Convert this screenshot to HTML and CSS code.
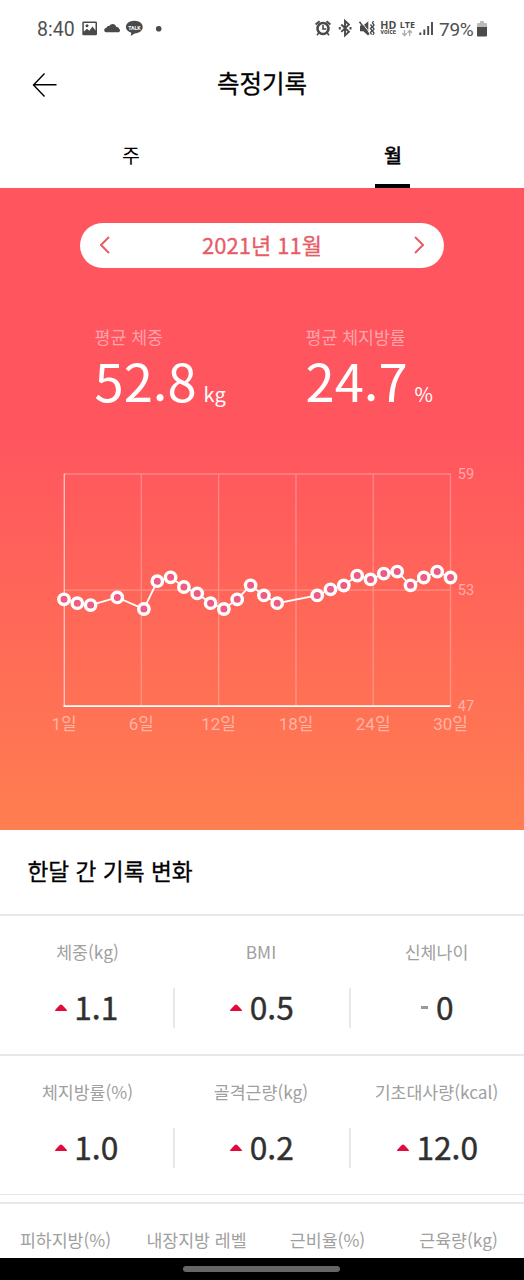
FILE: index.html
```html
<!DOCTYPE html>
<html lang="ko">
<head>
<meta charset="utf-8">
<meta name="viewport" content="width=device-width">
<title>측정기록</title>
<link rel="stylesheet" href="styles.css">
</head>
<body>
<div class="screen">
  <div class="status">
    <span class="clock">8:40</span>
    <svg class="status-left" width="84" height="20" viewBox="80 18 84 20" fill="#4a4a4a">
      <path fill-rule="evenodd" d="M83.5 21.5h12.300a1.200 1.200 0 0 1 1.200 1.200v11.300a1.200 1.200 0 0 1-1.200 1.200H83.500a1.200 1.200 0 0 1-1.200-1.200V22.700a1.200 1.200 0 0 1 1.200-1.200zM83.800 23v8.500l3.200-2.700 2.300 2 3.200-4.300 3 4V23z"/>
      <circle cx="87" cy="25.800" r="1.500"/>
      <path d="M106.800 32.300c-3.300 0-3.500-4.200-.3-4.600.4-1.400 1.500-2 2.800-1.700 1.500-3.200 6.300-2.700 7 1 1.700-.3 2.500.5 2.700 1.800 1.700.8 1.300 3.500-.8 3.500z"/>
      <path d="M134.300 20.800c5 0 8.400 2.800 8.400 6.300s-3.400 6.200-8 6.300l-4 2.600.6-3.200c-3.200-1-5.400-3-5.400-5.700 0-3.500 3.600-6.300 8.400-6.300z"/>
      <text class="talk" x="134.400" y="29.500" text-anchor="middle" textLength="12.500" lengthAdjust="spacingAndGlyphs">TALK</text>
      <circle cx="158.700" cy="28.800" r="2.800"/>
    </svg>
    <svg class="status-right" width="120" height="24" viewBox="314 17 120 24" fill="none" stroke="#4a4a4a">
      <circle cx="323" cy="28.500" r="5.500" stroke-width="2.600"/>
      <path d="M323 25v4h3.300M318.700 33l-1.700 2.200M327.300 33l1.700 2.200" stroke-width="1.600"/>
      <path d="M315.600 24.500l4-3.300M330.400 24.500l-4-3.300" stroke-width="2"/>
      <path d="M341.300 24.500l7.600 7.200-3.900 3.700V21l3.900 3.600-7.600 7.300" stroke-width="1.900"/>
      <path d="M338.800 28.300h2M349.500 28.300h2" stroke-width="2.400"/>
      <path d="M360 25.500h3.300l5-4.300v14.500l-5-4.500H360z" fill="#4a4a4a" stroke="none"/>
      <path d="M360.500 20.700l9.500 12.500" stroke="#fff" stroke-width="1"/>
      <path d="M359.500 21.700l9.500 12.800" stroke-width="1.500"/>
      <path d="M370.500 24.500l1.500 2-1.500 2 1.500 2-1.500 2 1 2M373.500 21l-1 2 1.500 2-1.500 2 1.500 2-1.500 2 1.500 2-1.200 2" stroke-width="1.300"/>
      <text class="hd" x="380.300" y="29" textLength="16" lengthAdjust="spacingAndGlyphs">HD</text>
      <text class="voice" x="380.500" y="34.400" textLength="15.500" lengthAdjust="spacingAndGlyphs">voice</text>
      <text class="lte" x="399.800" y="28" textLength="15.200" lengthAdjust="spacingAndGlyphs">LTE</text>
      <path d="M404.500 30v5.500M402.300 33.300l2.200 2.200 2.200-2.200M409.700 36v-5.500M407.500 32.700l2.200-2.200 2.200 2.200" stroke="#aaa" stroke-width="1.300"/>
      <path d="M420.300 32.500V35M424.300 29.500V35M428.200 26V35M432 22V35" stroke-width="1.900"/>
    </svg>
    <span class="percent">79%</span>
    <svg class="battery" width="10" height="16" viewBox="0 0 10 16"><path fill="#bbb" d="M3 0h4v2h2q1 0 1 1v4H0V3q0-1 1-1h2z"/><path fill="#4a4a4a" d="M0 6h10v8.500q0 1-1 1H1q-1 0-1-1z"/></svg>
  </div>

  <header class="header">
    <svg class="back" width="26" height="26" viewBox="0 0 26 26" fill="none" stroke="#000" stroke-width="1.400"><path d="M12.500 1.500L1.500 13l11 11.500M1.500 12.700h23"/></svg>
    <h1 class="title">측정기록</h1>
  </header>

  <nav class="tabs">
    <div class="tab">주</div>
    <div class="tab active">월</div>
  </nav>

  <section class="hero">
    <div class="month">
      <svg width="10" height="18" viewBox="0 0 10 18"><path d="M9 1L1 9l8 8"/></svg>
      <span>2021년 11월</span>
      <svg width="10" height="18" viewBox="0 0 10 18"><path d="M1 1l8 8-8 8"/></svg>
    </div>
    <div class="stats">
      <div><div class="stat-label">평균 체중</div><div class="stat-value">52.8<span class="unit">kg</span></div></div>
      <div><div class="stat-label">평균 체지방률</div><div class="stat-value">24.7<span class="unit">%</span></div></div>
    </div>
    <svg class="chart" width="524" height="290" viewBox="0 460 524 290">
      <path class="grid" d="M64 474H450.500V706M64 590.200H450.500M141.300 474V706M218.600 474V706M296 474V706M373.200 474V706"/>
      <path class="axis-y" d="M64.300 473.500V706"/>
      <path class="axis-x" d="M63.500 706.200H450.500"/>
      <polyline class="line" points="64,599.300 77.300,603.200 90.600,605.100 117.300,597.400 143.900,609 157.300,581.200 170.600,577.300 183.900,587 197.200,593.400 210.600,603.200 223.900,609 237.200,599.300 250.600,585.300 263.900,595.400 277.200,603.200 317.200,595.400 330.500,589.300 343.800,585.500 357.200,575.600 370.500,579.400 383.800,573.600 397.200,571.600 410.500,585.300 423.800,577.500 437.200,571.600 450.500,577.500"/>
      <g class="dots">
        <circle cx="64" cy="599.300" r="5.200"/><circle cx="77.300" cy="603.200" r="5.200"/><circle cx="90.600" cy="605.100" r="5.200"/><circle cx="117.300" cy="597.400" r="5.200"/><circle cx="143.900" cy="609" r="5.200"/><circle cx="157.300" cy="581.200" r="5.200"/><circle cx="170.600" cy="577.300" r="5.200"/><circle cx="183.900" cy="587" r="5.200"/><circle cx="197.200" cy="593.400" r="5.200"/><circle cx="210.600" cy="603.200" r="5.200"/><circle cx="223.900" cy="609" r="5.200"/><circle cx="237.200" cy="599.300" r="5.200"/><circle cx="250.600" cy="585.300" r="5.200"/><circle cx="263.900" cy="595.400" r="5.200"/><circle cx="277.200" cy="603.200" r="5.200"/><circle cx="317.200" cy="595.400" r="5.200"/><circle cx="330.500" cy="589.300" r="5.200"/><circle cx="343.800" cy="585.500" r="5.200"/><circle cx="357.200" cy="575.600" r="5.200"/><circle cx="370.500" cy="579.400" r="5.200"/><circle cx="383.800" cy="573.600" r="5.200"/><circle cx="397.200" cy="571.600" r="5.200"/><circle cx="410.500" cy="585.300" r="5.200"/><circle cx="423.800" cy="577.500" r="5.200"/><circle cx="437.200" cy="571.600" r="5.200"/><circle cx="450.500" cy="577.500" r="5.200"/>
      </g>
      <g class="y-labels"><text x="457.800" y="478.700">59</text><text x="457.800" y="595">53</text><text x="457.800" y="711">47</text></g>
      <g class="x-labels"><text x="64" y="729.500">1일</text><text x="141.300" y="729.500">6일</text><text x="218.600" y="729.500">12일</text><text x="296" y="729.500">18일</text><text x="373.200" y="729.500">24일</text><text x="450.500" y="729.500">30일</text></g>
    </svg>
  </section>

  <h2 class="section-title">한달 간 기록 변화</h2>

  <div class="row">
    <div class="cell"><div class="label">체중(kg)</div><div class="value"><svg class="up" width="12" height="7" viewBox="0 0 12 7"><path d="M0 7Q0 6 1 5L4.800 1Q6 0 7.200 1L11 5Q12 6 12 7z"/></svg><span>1.1</span></div></div>
    <div class="cell"><div class="label">BMI</div><div class="value"><svg class="up" width="12" height="7" viewBox="0 0 12 7"><path d="M0 7Q0 6 1 5L4.800 1Q6 0 7.200 1L11 5Q12 6 12 7z"/></svg><span>0.5</span></div></div>
    <div class="cell"><div class="label">신체나이</div><div class="value"><i class="dash"></i><span>0</span></div></div>
  </div>
  <div class="row last">
    <div class="cell"><div class="label">체지방률(%)</div><div class="value"><svg class="up" width="12" height="7" viewBox="0 0 12 7"><path d="M0 7Q0 6 1 5L4.800 1Q6 0 7.200 1L11 5Q12 6 12 7z"/></svg><span>1.0</span></div></div>
    <div class="cell"><div class="label">골격근량(kg)</div><div class="value"><svg class="up" width="12" height="7" viewBox="0 0 12 7"><path d="M0 7Q0 6 1 5L4.800 1Q6 0 7.200 1L11 5Q12 6 12 7z"/></svg><span>0.2</span></div></div>
    <div class="cell"><div class="label">기초대사량(kcal)</div><div class="value"><svg class="up" width="12" height="7" viewBox="0 0 12 7"><path d="M0 7Q0 6 1 5L4.800 1Q6 0 7.200 1L11 5Q12 6 12 7z"/></svg><span>12.0</span></div></div>
  </div>
  <div class="row four">
    <div class="label">피하지방(%)</div><div class="label">내장지방 레벨</div><div class="label">근비율(%)</div><div class="label">근육량(kg)</div>
  </div>
  <div class="navbar"><div class="handle"></div></div>
</div>
</body>
</html>
```
FILE: styles.css
```css
* { box-sizing: border-box; }
body { margin: 0; background: #fff; }
.screen {
  display: flex; flex-direction: column;
  width: 524px; height: 1280px; overflow: hidden;
  font-family: "Noto Sans CJK KR", sans-serif; color: #000;
}
.status {
  display: flex; align-items: center; height: 58px; padding-left: 37px;
  font-family: Roboto, sans-serif; font-size: 19.5px; color: #505050;
}
.clock { width: 43px; }
.status-left { margin-top: -2px; }
.status-right { margin-left: 150px; }
.percent { margin-left: 5px; width: 38px; font-size: 19px; letter-spacing: -.3px; }
.battery { display: block; }
.talk { font: bold 6px Roboto, sans-serif; fill: #fff; }
.hd, .voice, .lte { font-family: "Open Sans", sans-serif; font-weight: 700; fill: #4a4a4a; stroke: none; }
.hd { font-size: 10px; }
.voice { font-size: 6.500px; }
.lte { font-size: 9.500px; }
.header { display: grid; grid-template-columns: 80px 1fr 80px; align-items: center; height: 50px; }
.back { margin: 3px 0 0 32px; }
.title { margin: 0; text-align: center; font-size: 24.500px; font-weight: 400; line-height: 48px; -webkit-text-stroke: .3px; }
.tabs { display: grid; grid-template-columns: 1fr 1fr; height: 80px; }
.tab {
  display: flex; flex-direction: column; align-items: center; padding-top: 32px;
  font-size: 19.500px; line-height: 30px;
}
.active { -webkit-text-stroke: .6px; }
.active::after { content: ""; width: 35px; height: 4px; margin: auto 1px 0 0; background: #000; }
.hero { height: 642px; padding-top: 35px; background: linear-gradient(#ff555f 0%, #ff555f 38%, #ff7e50 100%); }
.month {
  display: flex; justify-content: space-between; align-items: center;
  width: 364px; height: 45px; margin: 0 auto; padding: 0 20px 1px;
  border-radius: 23px; background: #fff; color: #e85c66;
  font-size: 22px; line-height: 40px;
}
.month span { margin-top: -2px; -webkit-text-stroke: .3px; }
.month svg { fill: none; stroke: #e85c66; stroke-width: 2; }
.stats { display: grid; grid-template-columns: 211px 1fr; height: 88px; margin-top: 56px; padding-left: 94.500px; color: #fff; }
.stat-label { color: rgba(255,255,255,.48); font-size: 17.300px; line-height: 25px; }
.stat-value { font-size: 52.500px; line-height: 60px; }
.unit { margin-left: 7px; font-size: 20px; }
.chart { display: block; margin-top: 48px; }
.grid { fill: none; stroke: rgba(255,255,255,.27); stroke-width: 1.300; }
.axis-y { stroke: rgba(255,255,255,.6); stroke-width: 1.400; }
.axis-x { stroke: #fff; stroke-width: 1.700; }
.line { fill: none; stroke: #fff; stroke-width: 1.800; }
.dots { fill: #ed5b82; stroke: #fff; stroke-width: 3.400; }
.y-labels, .x-labels { font-family: Roboto, "Noto Sans CJK KR", sans-serif; fill: rgba(255,255,255,.48); }
.y-labels { font-size: 14.500px; }
.x-labels { font-size: 17px; text-anchor: middle; }
.section-title { height: 84px; margin: 0; padding-left: 27.500px; font-size: 22.700px; font-weight: 400; line-height: 82px; -webkit-text-stroke: .3px; }
.row { display: grid; grid-template-columns: 173px 176px 175px; height: 140px; padding-top: 23px; border-top: 2px solid #e8e8e8; }
.last { height: 141px; border-bottom: 1px solid #e5e5e5; }
.label { color: #a0a0a0; font-size: 17.300px; font-weight: 400; line-height: 26px; text-align: center; white-space: nowrap; }
.value {
  display: flex; justify-content: center; gap: 7.500px; height: 40px; margin-top: 23px;
  color: #303030; font-size: 31.700px; line-height: 36px; -webkit-text-stroke: .4px;
}
.cell:first-child .label { padding-left: 2px; }
.cell + .cell .value { border-left: 2px solid #e8e8e8; }
.up { margin-top: 16px; fill: #e2093c; }
.dash { width: 7px; height: 3px; margin-top: 18px; background: #999; }
.four { grid-template-columns: repeat(4, 1fr); height: 56px; margin-top: 7px; }
.navbar { display: flex; justify-content: center; height: 22px; padding-top: 8px; background: #000; }
.handle { width: 157px; height: 6px; margin-left: -1px; border-radius: 3px; background: #666; }
```
